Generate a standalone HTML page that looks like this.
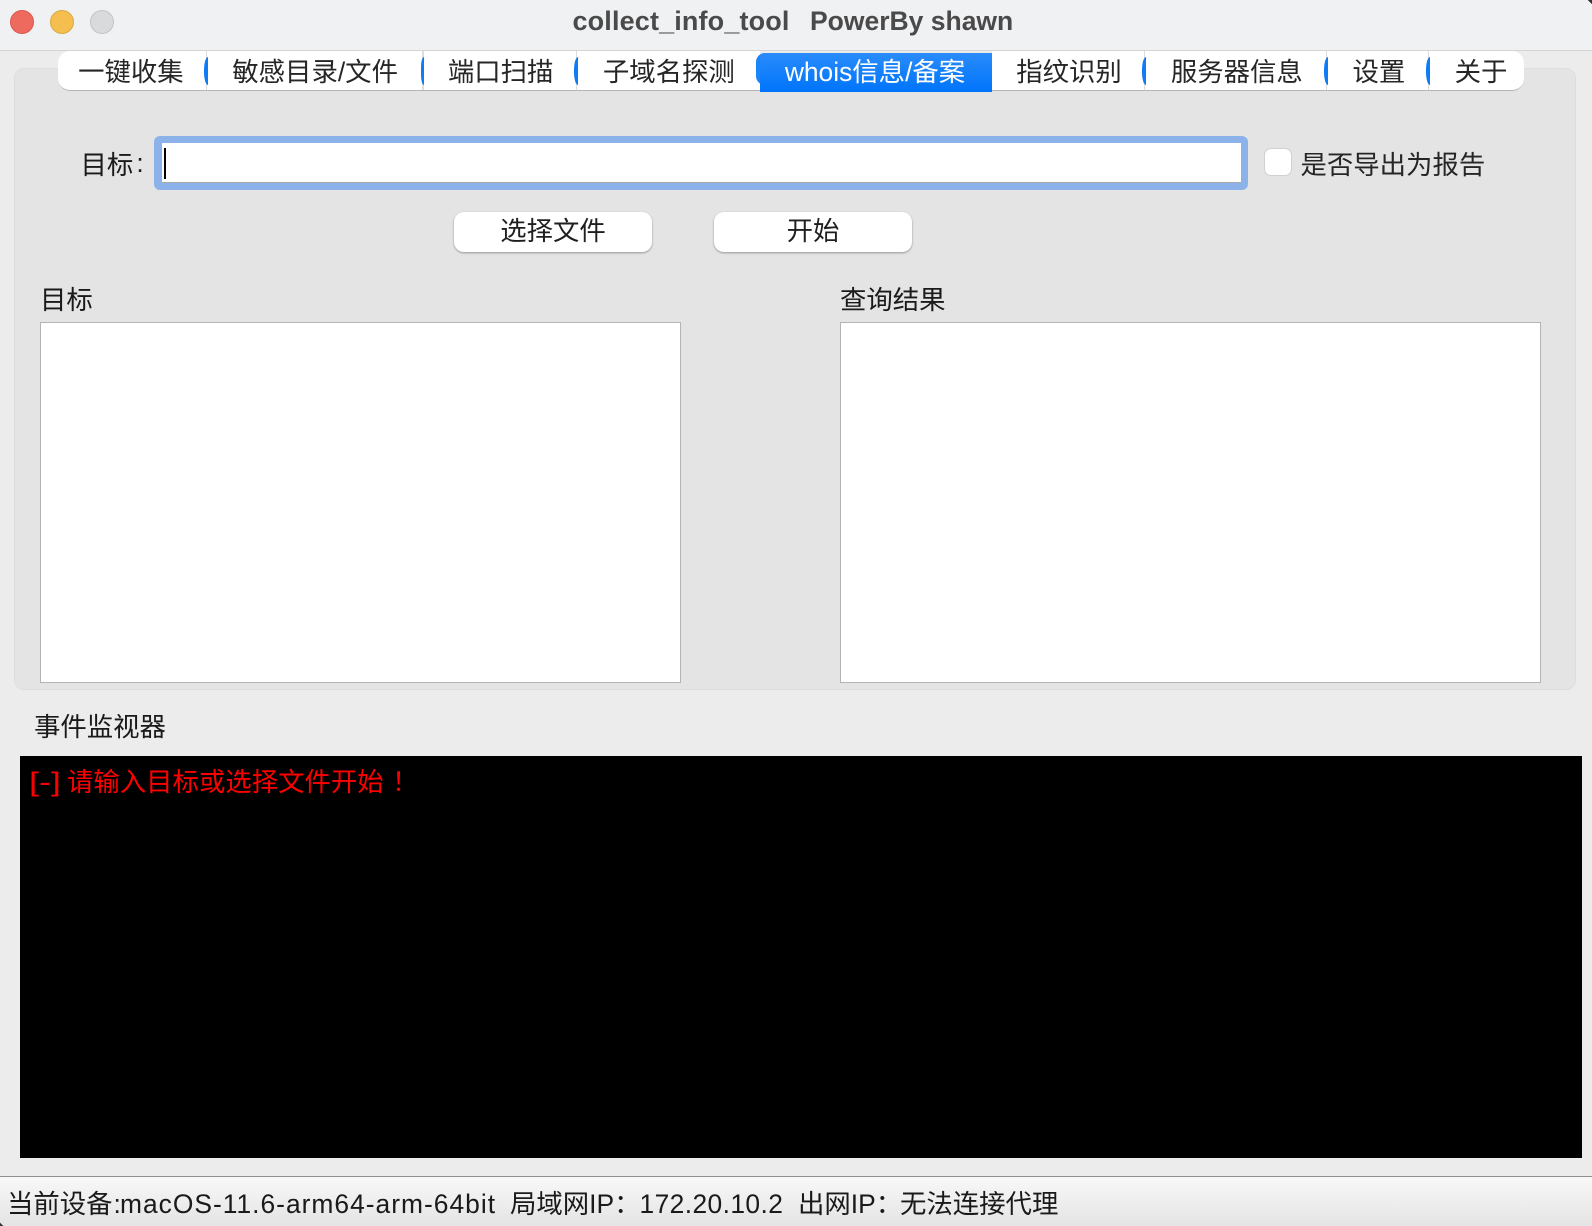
<!DOCTYPE html>
<html lang="zh">
<head>
<meta charset="utf-8">
<title>collect_info_tool PowerBy shawn</title>
<style>
html,body{margin:0;padding:0;width:1592px;height:1226px;overflow:hidden;background:#ececec}
body{position:relative;font-family:"Liberation Sans","Noto Sans CJK SC",sans-serif;font-size:26.4px;color:#1a1a1a}
div,span{position:absolute;box-sizing:border-box}
.t{white-space:nowrap;line-height:30px;height:30px}
.tab{top:51px;height:40px;background:#fff;border-bottom:1px solid #b5b5b5;text-align:center;line-height:43px;white-space:nowrap;color:#262626}
.sep{top:51px;width:1.2px;height:39px;background:#dcdcdc}
.blue{top:57px;width:3.7px;height:28px;background:#0f7cf5;border-radius:4px 0 0 4px / 13px 0 0 13px}
.btn{top:212px;height:40px;background:#fff;border-radius:10px;box-shadow:0 1px 2px rgba(0,0,0,.35);text-align:center;line-height:39px;color:#1f1f1f}
.list{background:#fff;border:1px solid #b4b4b4;top:322px;height:361px}
</style>
</head>
<body>
<div style="left:0;top:0;width:1592px;height:51px;background:#f0f1f3;border-bottom:1px solid #d4d4d4"></div>
<div style="left:10px;top:10px;width:24px;height:24px;border-radius:50%;background:#ee6a5f;border:1px solid #d9574d"></div>
<div style="left:50px;top:10px;width:24px;height:24px;border-radius:50%;background:#f5bf4f;border:1px solid #dba83f"></div>
<div style="left:90px;top:10px;width:24px;height:24px;border-radius:50%;background:#d9dadc;border:1px solid #c3c4c6"></div>
<div class="t" style="left:572.5px;top:6px;font-weight:bold;color:#4a4a4a;font-size:27px;letter-spacing:.15px">collect_info_tool</div>
<div class="t" style="left:810px;top:6px;font-weight:bold;color:#4a4a4a;font-size:26.5px">PowerBy shawn</div>
<div style="left:1587px;top:0;width:5px;height:5px;background:linear-gradient(45deg,transparent 55%,#333 60%)"></div>

<div style="left:14px;top:68px;width:1562px;height:622px;background:#e4e4e4;border:1px solid #dedede;border-radius:10px"></div>

<div class="tab" style="left:58px;width:147.7px;border-radius:12px 0 0 12px;padding-right:2px">一键收集</div>
<div class="tab" style="left:205.7px;width:216.9px;padding-left:2px">敏感目录/文件</div>
<div class="tab" style="left:422.6px;width:153px;padding-left:3px">端口扫描</div>
<div class="tab" style="left:575.6px;width:184.4px;padding-left:2px">子域名探测</div>
<div class="tab" style="left:992px;width:152px;padding-left:2px">指纹识别</div>
<div class="tab" style="left:1144px;width:181.7px;padding-left:4px">服务器信息</div>
<div class="tab" style="left:1325.7px;width:102.3px;padding-left:4px">设置</div>
<div class="tab" style="left:1428px;width:96px;border-radius:0 12px 12px 0;padding-left:10px">关于</div>

<div style="left:756px;top:53px;width:14px;height:32px;background:#1a84f9;border-radius:9px 0 0 9px"></div>
<div class="tab" style="left:760px;top:53px;width:232px;height:39px;background:linear-gradient(#2a8cfb,#0074fb);border:0;border-radius:4px 0 0 0;color:#fff;line-height:39px;padding-right:2px">whois信息/备案</div>

<div class="sep" style="left:205.5px"></div><div class="blue" style="left:204px"></div>
<div class="sep" style="left:422.4px"></div><div class="blue" style="left:420.6px"></div>
<div class="sep" style="left:575.6px"></div><div class="blue" style="left:574px"></div>
<div class="sep" style="left:1144px"></div><div class="blue" style="left:1142.4px"></div>
<div class="sep" style="left:1325.7px"></div><div class="blue" style="left:1324px"></div>
<div class="sep" style="left:1428px"></div><div class="blue" style="left:1426.4px"></div>

<div class="t" style="left:80.5px;top:150px">目标</div>
<div class="t" style="left:136.4px;top:148px">:</div>
<div style="left:154px;top:136px;width:1094px;height:54px;background:#8bb3ea;border-radius:6px"></div>
<div style="left:161.5px;top:143px;width:1079.5px;height:40px;background:#fff;border-bottom:1px solid #a9a9a9"></div>
<div style="left:164px;top:148px;width:2px;height:31px;background:#000"></div>
<div style="left:1264px;top:148px;width:28px;height:28px;background:#fff;border:1px solid #d0d0d0;border-radius:7px"></div>
<div class="t" style="left:1300.5px;top:150px;color:#262626">是否导出为报告</div>

<div class="btn" style="left:454px;width:198px">选择文件</div>
<div class="btn" style="left:714px;width:198px">开始</div>

<div class="t" style="left:40px;top:285px">目标</div>
<div class="t" style="left:840px;top:285px">查询结果</div>
<div class="list" style="left:40px;width:641px"></div>
<div class="list" style="left:840px;width:701px"></div>

<div class="t" style="left:34px;top:712px">事件监视器</div>
<div style="left:20px;top:756px;width:1562px;height:402px;background:#000"></div>
<div class="t" style="left:29px;top:767px;color:#f00;transform:scaleX(1.36);transform-origin:left center">[-]</div>
<div class="t" style="left:67px;top:767px;color:#f00">请输入目标或选择文件开始</div>
<div class="t" style="left:392px;top:767px;color:#f00">！</div>

<div style="left:0;top:1176px;width:1592px;height:50px;background:linear-gradient(#f8f8f8,#e4e4e4);border-top:1px solid #8f8f8f"></div>
<div style="left:0;top:1222px;width:4px;height:4px;background:linear-gradient(225deg,transparent 55%,#333 60%)"></div>
<div class="t" style="left:7px;top:1189px">当前设备</div>
<div class="t" style="left:113.5px;top:1189px">:</div>
<div class="t" style="left:120px;top:1189px;letter-spacing:1px">macOS-11.6-arm64-arm-64bit</div>
<div class="t" style="left:510px;top:1189px">局域网IP：</div>
<div class="t" style="left:639.5px;top:1189px;letter-spacing:.4px">172.20.10.2</div>
<div class="t" style="left:798px;top:1189px">出网IP：</div>
<div class="t" style="left:900px;top:1189px">无法连接代理</div>
</body>
</html>
